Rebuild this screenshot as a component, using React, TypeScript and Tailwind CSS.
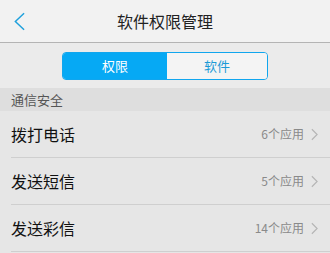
import React from 'react';

const rows = [
  { name: '拨打电话', count: '6个应用' },
  { name: '发送短信', count: '5个应用' },
  { name: '发送彩信', count: '14个应用' },
];

function Chevron({ className }: { className?: string }) {
  return (
    <svg viewBox="0 0 8 14" className={className} fill="none" stroke="currentColor" strokeWidth="1.3">
      <path d="M1 1l6 6-6 6" />
    </svg>
  );
}

export default function App() {
  return (
    <div
      className="w-[330px] h-[253px] overflow-hidden bg-[#e6e6e6]"
      style={{ fontFamily: '"Noto Sans CJK SC", Roboto, sans-serif' }}
    >
      <div className="relative h-[43px] bg-[#f2f2f2] border-b border-[#b4b4b4] flex items-center justify-center">
        <svg
          viewBox="0 0 12 20"
          className="absolute left-[14px] top-[12px] w-[11px] h-[19px] text-[#1ea0dc]"
          fill="none"
          stroke="currentColor"
          strokeWidth="1.6"
        >
          <path d="M11 1L1.5 10L11 19" />
        </svg>
        <span className="text-[16px] text-[#222]">软件权限管理</span>
      </div>
      <div className="h-[45px] bg-[#ebebeb] flex items-center justify-center">
        <div className="flex w-[206px] h-[28px] rounded-[4px] border border-[#11a6ee] overflow-hidden">
          <div className="w-[104px] bg-[#06a9f4] text-white text-[13px] flex items-center justify-center">
            权限
          </div>
          <div className="flex-1 bg-[#f4f4f4] text-[#1b9ad6] text-[13px] flex items-center justify-center">
            软件
          </div>
        </div>
      </div>
      <div className="h-[23px] bg-[#dedede] flex items-center px-[11px] text-[13px] text-[#555]">
        通信安全
      </div>
      {rows.map((r) => (
        <div key={r.name} className="ml-[11px] h-[47px] border-b border-[#cfcfcf] flex items-center pr-[12px]">
          <span className="flex-1 text-[16px] text-[#111]">{r.name}</span>
          <span className="text-[12px] text-[#8a8a8a]">{r.count}</span>
          <Chevron className="ml-[7px] w-[7px] h-[13px] text-[#b4b4b4]" />
        </div>
      ))}
    </div>
  );
}
